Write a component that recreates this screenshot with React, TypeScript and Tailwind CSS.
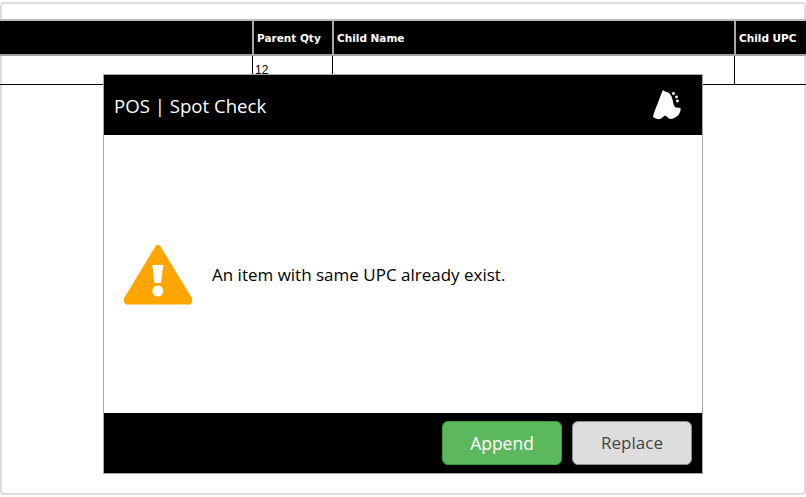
import React from 'react';

const columns = [
  { label: '', width: 'w-[252px]' },
  { label: 'Parent Qty', width: 'w-[80px]' },
  { label: 'Child Name', width: 'w-[402px]' },
  { label: 'Child UPC', width: 'flex-1' },
];

const LogoMark = () => (
  <svg width="30" height="32" viewBox="0 0 30 32" className="block">
    <path
      d="M11 1 C12.5 2.5 15 3 17 4 C19 6 20 8 20.5 10.5 C21 13 21.5 16 23 18 C24.5 19 26.5 18.5 28.5 19 C29 21 28 24 26.5 26 C24.5 28 21 30 18.5 30 C16.5 30 15 27 13 26.5 C11.5 27 10 29.5 8 30 C6 30.5 3 29.5 1 28 C1.5 24 3.5 20 5.5 15 C7 11 9 5 11 1 Z"
      fill="#fff"
    />
    <circle cx="21.5" cy="4.5" r="1.4" fill="#fff" />
    <circle cx="24.5" cy="8" r="1.4" fill="#fff" />
    <circle cx="25.5" cy="12" r="1.4" fill="#fff" />
  </svg>
);

const WarningIcon = () => (
  <svg width="68" height="61" viewBox="0 0 68 61" className="mt-[1px] block">
    <path
      d="M34 4 L65 55 A1.5 1.5 0 0 1 63.5 57.5 L4.5 57.5 A1.5 1.5 0 0 1 3 55 Z"
      fill="#ffa500"
      stroke="#ffa500"
      strokeWidth="6"
      strokeLinejoin="round"
    />
    <path d="M28.3 21 L39.3 21 L37 39 L30.5 39 Z" fill="#fff" />
    <circle cx="33.8" cy="47" r="5.5" fill="#fff" />
  </svg>
);

export default function App() {
  return (
    <div className="relative h-[497px] w-[806px] overflow-hidden bg-white font-['Open_Sans','Noto_Sans',sans-serif]">
      {/* page panel behind the dialog */}
      <div className="mt-[2px] h-[493px] rounded-[4px] border-2 border-[#dddddd] pt-[15px]">
        <div className="-mx-[2px] border-t-2 border-[#b8bec8]">
          <div className="flex h-[35px] border-b-2 border-[#a0a0a0] bg-black">
            {columns.map((col, i) => (
              <div
                key={i}
                className={`${col.width} flex items-center pl-[3px] pt-[2px] font-['DejaVu_Sans',sans-serif] text-[10.5px] font-bold text-white ${i > 0 ? 'border-l-2 border-[#a8a8a8]' : ''}`}
              >
                {col.label}
              </div>
            ))}
          </div>
          <div className="flex h-[29px] border-b border-black">
            {columns.map((col, i) => (
              <div
                key={i}
                className={`${col.width} pl-[2px] pt-[5px] font-['Liberation_Sans',sans-serif] text-[12px] text-black ${i > 0 ? 'border-l border-black' : ''}`}
              >
                {i === 1 ? '12' : ''}
              </div>
            ))}
          </div>
        </div>
      </div>

      {/* dialog */}
      <div className="absolute left-[103px] top-[74px] flex h-[400px] w-[600px] flex-col border border-[#a8a8a8] bg-white">
        <div className="flex h-[60px] items-center justify-between bg-black pl-[10px] pr-[20px]">
          <span className="mt-[1px] text-[18.6px] text-white">POS | Spot Check</span>
          <LogoMark />
        </div>
        <div className="flex flex-1 items-center gap-[20px] pl-[20px]">
          <WarningIcon />
          <span className="mt-[2px] text-[17px] text-black">An item with same UPC already exist.</span>
        </div>
        <div className="flex h-[60px] items-center justify-end gap-[10px] bg-black pr-[10px]">
          <button className="h-[44px] w-[120px] rounded-[6px] border border-[#3f9a3f] bg-[#5cb85c] text-[17.5px] text-white">
            Append
          </button>
          <button className="h-[44px] w-[120px] rounded-[6px] border border-[#8f8f8f] bg-[#dddddd] text-[17px] text-[#444]">
            Replace
          </button>
        </div>
      </div>
    </div>
  );
}
